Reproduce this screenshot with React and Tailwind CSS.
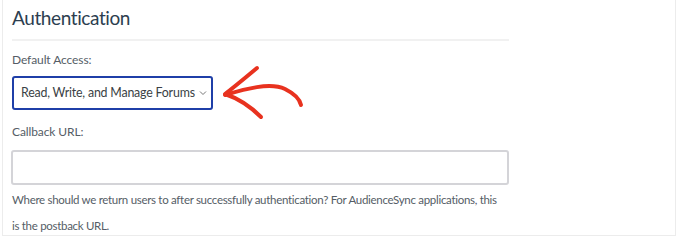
import React from "react";

export default function App() {
  return (
    <div className="w-[680px] h-[240px] bg-white relative font-['Lato',sans-serif]">
      <div className="absolute left-[2px] top-0 w-[674px] h-[236px] border border-[#ececec] border-t-0" />
      <div className="relative pl-[12px] pt-[4px] w-[510px]">
        <h2 className="text-[19px] tracking-[-0.4px] leading-[28px] text-[#2c3e50] font-normal">Authentication</h2>
        <div className="h-[2px] bg-[#f1f1f1] mt-[7px] w-[497px]" />
        <label className="block text-[12px] tracking-[-0.1px] text-[#555d66] mt-[9px] leading-[20px]">Default Access:</label>
        <div className="mt-[6px] w-[201px] h-[34px] border-2 border-[#1f3fa8] rounded-[3px] flex items-center justify-between pl-[7px] pr-[3px]">
          <span className="text-[12.4px] tracking-[-0.2px] text-[#3a3f45] whitespace-nowrap">Read, Write, and Manage Forums</span>
          <svg width="10" height="10" viewBox="0 0 10 10" className="text-[#777]">
            <path d="M2 3.5 L5 6.5 L8 3.5" fill="none" stroke="currentColor" strokeWidth="1" />
          </svg>
        </div>
        <label className="block text-[12px] tracking-[-0.1px] text-[#555d66] mt-[12px] leading-[20px]">Callback URL:</label>
        <div className="mt-[8px] -ml-[1px] w-[498px] h-[35px] border-2 border-[#d4d4d8] rounded-[3px]" />
        <p className="text-[11.5px] tracking-[-0.3px] text-[#555d66] leading-[26px] mt-[2px] whitespace-nowrap">
          Where should we return users to after successfully authentication? For AudienceSync applications, this
          <br />
          is the postback URL.
        </p>
      </div>
      <svg className="absolute left-[215px] top-[62px]" width="100" height="64" viewBox="0 0 100 64">
        <path d="M10 33 C30 27 55 20 70 27 C80 32 85 38 86 43" fill="none" stroke="#e8321f" strokeWidth="4" strokeLinecap="round" />
        <path d="M42 6 C30 16 18 26 10 32 C22 36 35 44 46 55" fill="none" stroke="#e8321f" strokeWidth="4" strokeLinecap="round" strokeLinejoin="round" />
      </svg>
    </div>
  );
}
